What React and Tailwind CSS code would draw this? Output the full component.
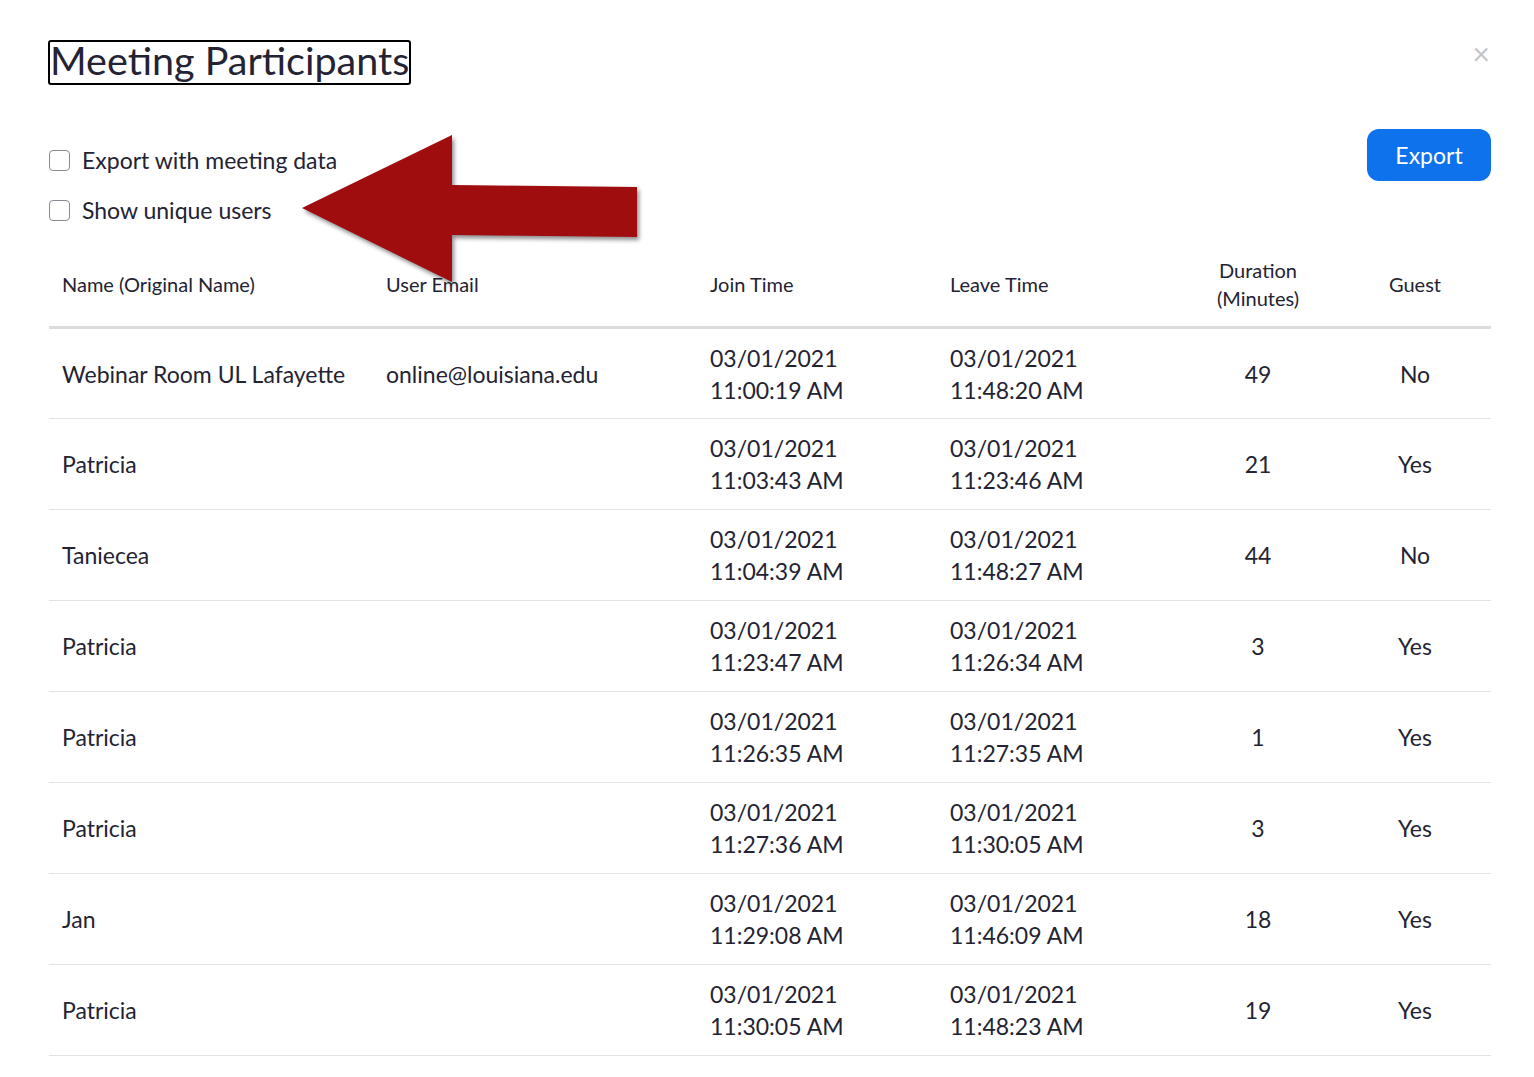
const rows = [
  { name: "Webinar Room UL Lafayette", email: "online@louisiana.edu", joinD: "03/01/2021", joinT: "11:00:19 AM", leaveD: "03/01/2021", leaveT: "11:48:20 AM", dur: "49", guest: "No" },
  { name: "Patricia", email: "", joinD: "03/01/2021", joinT: "11:03:43 AM", leaveD: "03/01/2021", leaveT: "11:23:46 AM", dur: "21", guest: "Yes" },
  { name: "Taniecea", email: "", joinD: "03/01/2021", joinT: "11:04:39 AM", leaveD: "03/01/2021", leaveT: "11:48:27 AM", dur: "44", guest: "No" },
  { name: "Patricia", email: "", joinD: "03/01/2021", joinT: "11:23:47 AM", leaveD: "03/01/2021", leaveT: "11:26:34 AM", dur: "3", guest: "Yes" },
  { name: "Patricia", email: "", joinD: "03/01/2021", joinT: "11:26:35 AM", leaveD: "03/01/2021", leaveT: "11:27:35 AM", dur: "1", guest: "Yes" },
  { name: "Patricia", email: "", joinD: "03/01/2021", joinT: "11:27:36 AM", leaveD: "03/01/2021", leaveT: "11:30:05 AM", dur: "3", guest: "Yes" },
  { name: "Jan", email: "", joinD: "03/01/2021", joinT: "11:29:08 AM", leaveD: "03/01/2021", leaveT: "11:46:09 AM", dur: "18", guest: "Yes" },
  { name: "Patricia", email: "", joinD: "03/01/2021", joinT: "11:30:05 AM", leaveD: "03/01/2021", leaveT: "11:48:23 AM", dur: "19", guest: "Yes" },
];

function Check({ label }) {
  return (
    <label className="flex items-center gap-[12px] h-[30px]">
      <span className="ml-[1px] w-[21px] h-[21px] rounded-[4px] border border-[#8a8a93] bg-white" />
      <span className="text-[23px] text-[#232333]">{label}</span>
    </label>
  );
}

export default function App() {
  return (
    <div className="relative min-h-screen overflow-hidden bg-white text-[#232333] pl-[48px] pr-[43px] pt-[40px]" style={{ fontFamily: "Lato, 'Open Sans', sans-serif" }}>
      {/* header */}
      <div className="flex items-start justify-between">
        <h1 className="border-2 border-black rounded-[3px] h-[45px] pl-0 pr-0 pb-[6px] flex items-center text-[39.5px] leading-none font-normal text-[#232333]">
          Meeting Participants
        </h1>
        <span className="mr-[1px] mt-[-2px] text-[30px] leading-none text-[#c4c4c8]">×</span>
      </div>

      {/* options */}
      <div className="flex items-start justify-between mt-[44px]">
        <div className="flex flex-col gap-[20px] pt-[16px]">
          <Check label="Export with meeting data" />
          <Check label="Show unique users" />
        </div>
        <button className="w-[124px] h-[52px] rounded-[12px] bg-[#0e72ed] text-white text-[23px]">
          Export
        </button>
      </div>

      {/* table */}
      <table className="ml-[1px] w-[1442px] table-fixed border-collapse mt-[31px]">
        <colgroup>
          <col className="w-[324px]" />
          <col className="w-[324px]" />
          <col className="w-[240px]" />
          <col className="w-[240px]" />
          <col className="w-[162px]" />
          <col className="w-[152px]" />
        </colgroup>
        <thead>
          <tr className="h-[71px] border-b-[3px] border-[#dcdcde] text-[20px] leading-[28px] text-[#232333]">
            <th className="text-left font-normal pl-[13px] pb-[14px]">Name (Original Name)</th>
            <th className="text-left font-normal pl-[13px] pb-[14px]">User Email</th>
            <th className="text-left font-normal pl-[13px] pb-[14px]">Join Time</th>
            <th className="text-left font-normal pl-[13px] pb-[14px]">Leave Time</th>
            <th className="text-center font-normal pb-[14px]">Duration<br />(Minutes)</th>
            <th className="text-center font-normal pb-[14px]">Guest</th>
          </tr>
        </thead>
        <tbody>
          {rows.map((r, i) => (
            <tr key={i} className="h-[91px] border-b border-[#e3e3e6] text-[23px] leading-[32px] text-[#232333]">
              <td className="pl-[13px]">{r.name}</td>
              <td className="pl-[13px]">{r.email}</td>
              <td className="pl-[13px]">{r.joinD}<br />{r.joinT}</td>
              <td className="pl-[13px]">{r.leaveD}<br />{r.leaveT}</td>
              <td className="text-center">{r.dur}</td>
              <td className="text-center">{r.guest}</td>
            </tr>
          ))}
        </tbody>
      </table>

      {/* annotation arrow */}
      <svg className="absolute left-[295px] top-[130px] w-[350px] h-[160px]" viewBox="0 0 350 160" style={{ filter: "drop-shadow(2px 3px 2px rgba(0,0,0,0.45))" }}>
        <polygon points="7,78 157,5 157,55 342,57 342,107 157,105 157,152" fill="#a00d0f" />
      </svg>
    </div>
  );
}
